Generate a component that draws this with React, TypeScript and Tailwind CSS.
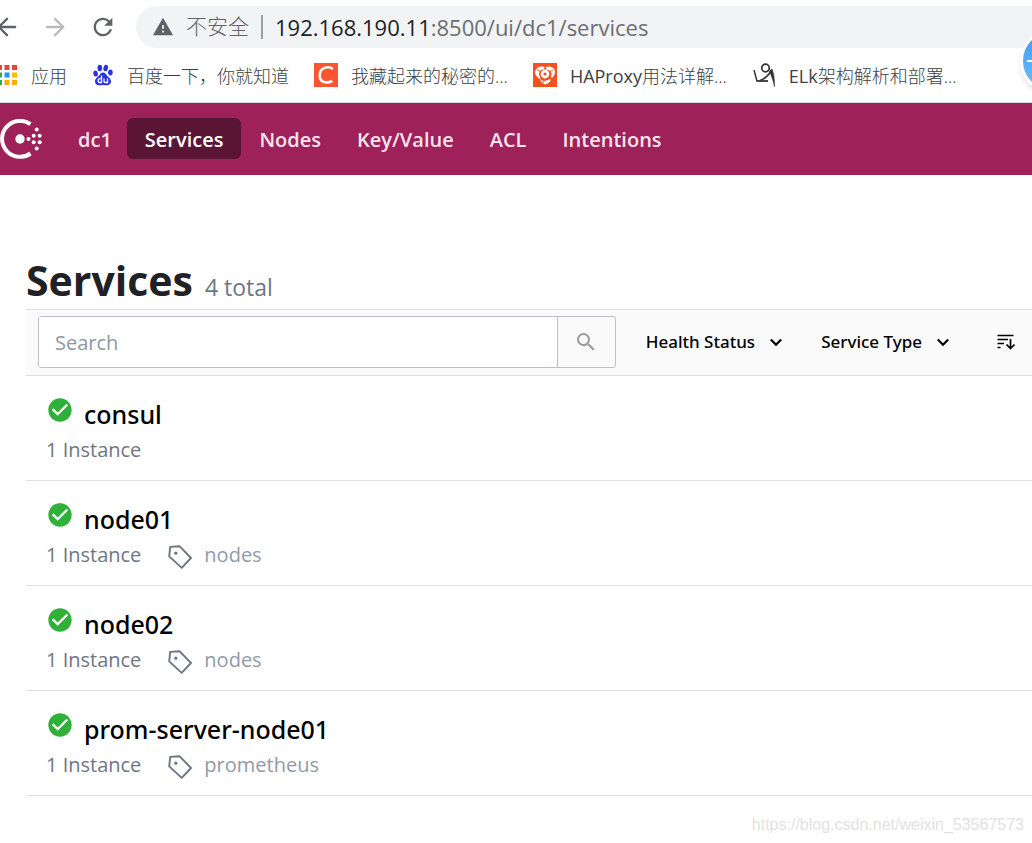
import { useState } from 'react';
import { ArrowLeft, ArrowRight } from 'lucide-react';
import { MdCheckCircle, MdRefresh, MdSearch, MdWarning } from 'react-icons/md';

interface Service {
  name: string;
  instances: number;
  tag?: string;
}

const services: Service[] = [
  { name: 'consul', instances: 1 },
  { name: 'node01', instances: 1, tag: 'nodes' },
  { name: 'node02', instances: 1, tag: 'nodes' },
  { name: 'prom-server-node01', instances: 1, tag: 'prometheus' },
];

const navItems = ['Services', 'Nodes', 'Key/Value', 'ACL', 'Intentions'];

const appColors = [
  '#ea4335', '#ea4335', '#ea4335',
  '#34a853', '#2196f3', '#fbbc05',
  '#34a853', '#fbab05', '#fbab05',
];

function AppsIcon() {
  return (
    <svg className="-ml-1 size-[22px] shrink-0" viewBox="0 0 22 22">
      {appColors.map((color, i) => (
        <rect key={i} x={1 + (i % 3) * 7.5} y={1 + Math.floor(i / 3) * 7.5} width="5" height="5" fill={color} />
      ))}
    </svg>
  );
}

function BaiduIcon() {
  return (
    <svg className="size-[22px] shrink-0" viewBox="0 0 22 22" fill="#2932e1">
      <ellipse cx="3.6" cy="9.6" rx="2.3" ry="3" transform="rotate(-10 3.6 9.6)" />
      <ellipse cx="7.8" cy="4" rx="2.3" ry="3.2" />
      <ellipse cx="13.7" cy="4" rx="2.3" ry="3.2" transform="rotate(12 13.7 4)" />
      <ellipse cx="18.4" cy="8.6" rx="2.3" ry="3" />
      <path d="M11 8.5c2 0 3 1.500 4 3 1.500 2 4 3 4 6 0 2.600-2 3.700-4 3.700-1.600 0-2.500-.3-4-.3s-2.500.3-4 .3c-2.300 0-4-1.300-4-3.900 0-2.800 2.500-3.800 4-5.800 1-1.500 2-3 4-3z" />
      <path d="M9.500 11.500v7H8a1.900 1.900 0 0 1 0-3.800h1.500M12 14.500v2.800c0 .8.500 1.200 1.200 1.200h2.300v-4" fill="none" stroke="#fff" strokeWidth="1.300" />
    </svg>
  );
}

function CsdnIcon() {
  return (
    <svg className="size-6 shrink-0" viewBox="0 0 24 24">
      <rect width="24" height="24" fill="#fc5531" />
      <path d="M19 5.800c-5-3-13-1.500-13.300 6.200C5.500 19.500 12 20.800 18.300 18" fill="none" stroke="#fff" strokeWidth="2.600" />
    </svg>
  );
}

function HaproxyIcon() {
  return (
    <svg className="size-6 shrink-0" viewBox="0 0 24 24">
      <rect width="24" height="24" fill="#f4511e" />
      <path d="M2 8.500C3 4.500 7 2.500 11.500 4l-.5 2.500c-3.500-.5-5 1.500-5 5L8 17 5.500 15C3 13 2 11 2 8.500z" fill="#fff" />
      <path d="M13 4c4-1.500 8 0 9 4 .3 2.500-.8 5-3 7l-1-1c1.500-4 0-7-5-7.500z" fill="#fff" />
      <path d="M7 16.500c2 1.500 6 2 9.500-.5l1.500.5c-1 2.500-3 4.500-6 5-2-.5-4-2.500-5-5z" fill="#fff" />
      <circle cx="12" cy="11" r="3" fill="none" stroke="#fff" strokeWidth="2.800" />
      <path d="M4 6.500 6.500 8M20 7l-3 1.500M10 20l1.500-2.500" stroke="#f4511e" strokeWidth=".9" />
    </svg>
  );
}

function FigureIcon() {
  return (
    <svg className="size-6 shrink-0" viewBox="0 0 24 24" fill="none" stroke="#333">
      <circle cx="13.500" cy="5" r="3.800" strokeWidth="1.700" />
      <path d="M2 7 5 18.200" strokeWidth="1.400" />
      <path d="M4.500 18h11.500" strokeWidth="1.800" />
      <path d="M8.500 17c4-1 7.500-4 10.500-9" strokeWidth="1.500" />
      <path d="M17.500 8 20 6c2 5 2.500 10 2.500 17.500-1-5-2.500-9-5-15.500z" fill="#333" strokeWidth=".6" />
    </svg>
  );
}

function ConsulLogo() {
  return (
    <svg className="h-10 w-[42px]" viewBox="0 0 42 40" fill="#fff">
      <path d="M30.500 5.200A18 18 0 1 0 30.500 34.500" fill="none" stroke="#fff" strokeWidth="4" />
      <circle cx="20" cy="20" r="4.700" />
      <circle cx="28.500" cy="20" r="2" />
      <circle cx="33.700" cy="16.700" r="2" />
      <circle cx="33.700" cy="23.300" r="2" />
      <circle cx="36.700" cy="10.400" r="2" />
      <circle cx="36.700" cy="29.500" r="2" />
      <circle cx="39.700" cy="16.700" r="2" />
      <circle cx="39.700" cy="23.300" r="2" />
    </svg>
  );
}

function Chevron() {
  return (
    <svg className="h-3 w-3" viewBox="0 0 12 12" fill="none" stroke="currentColor" strokeWidth="2.200">
      <path d="M.8 3.500 6 8.700l5.200-5.200" />
    </svg>
  );
}

function SortIcon() {
  return (
    <svg className="h-4 w-5" viewBox="0 0 20 16" fill="none" stroke="currentColor" strokeWidth="1.700">
      <path d="M1.500 1.500h16M1.500 5.500h10.500M1.500 9.500h6.500M1.500 13.500h3M14.500 5v9.500M10.500 10.500l4 4 4-4" />
    </svg>
  );
}

function TagIcon() {
  return (
    <svg className="mt-1 size-6" viewBox="0 0 24 24" fill="none" stroke="#6f7682" strokeWidth="1.900" strokeLinejoin="round">
      <path d="M2.200 1.900 11.500 1.200 23 13 13.700 22.900 1.200 11.400z" />
      <circle cx="7.800" cy="8.200" r="1.600" fill="#6f7682" stroke="none" />
    </svg>
  );
}

const bookmarks = [
  { latin: '', label: '应用', icon: <AppsIcon /> },
  { latin: '', label: '百度一下，你就知道', icon: <BaiduIcon /> },
  { latin: '', label: '我藏起来的秘密的...', icon: <CsdnIcon /> },
  { latin: 'HAProxy', label: '用法详解...', icon: <HaproxyIcon /> },
  { latin: 'ELk', label: '架构解析和部署...', icon: <FigureIcon /> },
];

function BrowserBar() {
  return (
    <div className="relative border-b border-[#d5d7dc] bg-white">
      <div className="flex items-center pt-[6px]">
        <button type="button" aria-label="Back" className="-ml-[7px] text-[#5f6368]">
          <ArrowLeft size={28} strokeWidth={2} />
        </button>
        <button type="button" aria-label="Forward" className="ml-5 text-[#babcbe]">
          <ArrowRight size={28} strokeWidth={2} />
        </button>
        <button type="button" aria-label="Reload" className="ml-5 text-[#5f6368]">
          <MdRefresh size={28} />
        </button>
        <div className="ml-[19px] flex h-[42px] flex-1 items-center overflow-hidden rounded-l-full bg-[#f1f3f4] pl-4 whitespace-nowrap">
          <MdWarning size={22} className="text-[#5f6368]" />
          <span className="ml-3 text-[21px] font-light text-[#5f6368]">不安全</span>
          <span className="mx-3 h-6 w-[2px] bg-[#9aa0a6]" />
          <span className="text-[22px] text-[#6b6e72]">
            <span className="text-[#202124]">192.168.190.11</span>:8500/ui/dc1/services
          </span>
        </div>
      </div>
      <div className="flex h-[54px] items-center gap-[25px] overflow-hidden whitespace-nowrap">
        {bookmarks.map((b) => (
          <a key={b.label} href="#" className="flex items-center gap-[13px] text-lg font-light text-[#3c4043]">
            {b.icon}
            <span className="pt-[2px]">
              <span className="font-normal">{b.latin}</span>
              {b.label}
            </span>
          </a>
        ))}
      </div>
      <div className="absolute top-0 right-0 h-full w-4 overflow-hidden">
        <div className="absolute top-[29px] left-1 flex size-16 items-center rounded-full border-3 border-white bg-linear-to-b from-[#3d9bf5] to-[#6cbcfa] shadow-md">
          <span className="ml-1 h-[2px] w-8 bg-white" />
        </div>
      </div>
    </div>
  );
}

export default function App() {
  const [active, setActive] = useState('Services');
  const [search, setSearch] = useState('');

  const visible = services.filter((s) => s.name.includes(search));

  return (
    <div className="relative min-h-screen overflow-hidden bg-white font-['Open_Sans','Noto_Sans_CJK_SC',sans-serif]">
      <BrowserBar />

      <header className="flex h-[72px] items-center bg-[#9e2159] pb-px text-xl font-semibold text-[#f7e4ed]">
        <a href="#" aria-label="Consul">
          <ConsulLogo />
        </a>
        <nav className="ml-[18px] flex items-center">
          <a href="#" className="pt-[3px] pr-[15px] pl-[18px]">dc1</a>
          {navItems.map((item) => (
            <a
              key={item}
              href="#"
              onClick={() => setActive(item)}
              className={
                item === active
                  ? 'flex h-[41px] items-center rounded-md bg-[#5a1434] px-[18px] pt-[3px] text-white'
                  : 'flex h-[41px] items-center px-[18px] pt-[3px]'
              }
            >
              {item}
            </a>
          ))}
        </nav>
      </header>

      <main className="pt-[76px] pl-[26px]">
        <h1 className="flex items-baseline gap-3 text-[41px] leading-[58px] font-bold text-[#1f2124]">
          Services
          <span className="text-[23px] leading-none font-normal text-[#6f7682]">4 total</span>
        </h1>

        <form
          className="flex h-[67px] items-start border-y border-[#dce0e6] bg-[#fafafa] pt-[6px] pl-3"
          onSubmit={(e) => e.preventDefault()}
        >
          <div className="flex h-[52px] min-w-0 flex-1 overflow-hidden rounded-[3px] border border-[#bac1cc]">
            <input
              type="text"
              aria-label="Search"
              placeholder="Search"
              value={search}
              onChange={(e) => setSearch(e.target.value)}
              className="min-w-0 flex-1 bg-white px-4 pt-[2px] text-xl outline-none placeholder:text-[#8f979f]"
            />
            <button
              type="submit"
              aria-label="Submit search"
              className="flex w-[58px] items-center justify-center border-l border-[#bac1cc] text-[#9a9a9a]"
            >
              <MdSearch size={24} />
            </button>
          </div>
          <div className="flex h-[52px] items-center pl-[30px] font-['Noto_Sans',sans-serif] text-[17px] font-medium text-black">
            <button type="button" className="flex items-center gap-[15px]">
              Health Status
              <Chevron />
            </button>
            <button type="button" className="ml-[39px] flex items-center gap-[15px]">
              Service Type
              <Chevron />
            </button>
            <button type="button" aria-label="Sort" className="mr-4 ml-[47px]">
              <SortIcon />
            </button>
          </div>
        </form>

        <ul>
          {visible.map((service) => (
            <li key={service.name} className="h-[105px] border-b border-[#dce0e6] pt-5 pl-5">
              <a href="#" className="flex items-start gap-[10px]">
                <MdCheckCircle size={28} className="text-[#2eb039]" />
                <span className="font-['Noto_Sans',sans-serif] text-[25px] leading-9 font-medium text-black">
                  {service.name}
                </span>
              </a>
              <div className="flex items-center text-xl leading-9 text-[#6f7682]">
                <span>{service.instances} Instance</span>
                {service.tag && (
                  <span className="ml-[27px] flex items-center gap-3 text-[#939aa7]">
                    <TagIcon />
                    {service.tag}
                  </span>
                )}
              </div>
            </li>
          ))}
        </ul>
      </main>

      <span className="absolute right-2 bottom-[6px] font-['Liberation_Sans',sans-serif] text-base text-[#e2e2e2]">
        https://blog.csdn.net/weixin_53567573
      </span>
    </div>
  );
}
